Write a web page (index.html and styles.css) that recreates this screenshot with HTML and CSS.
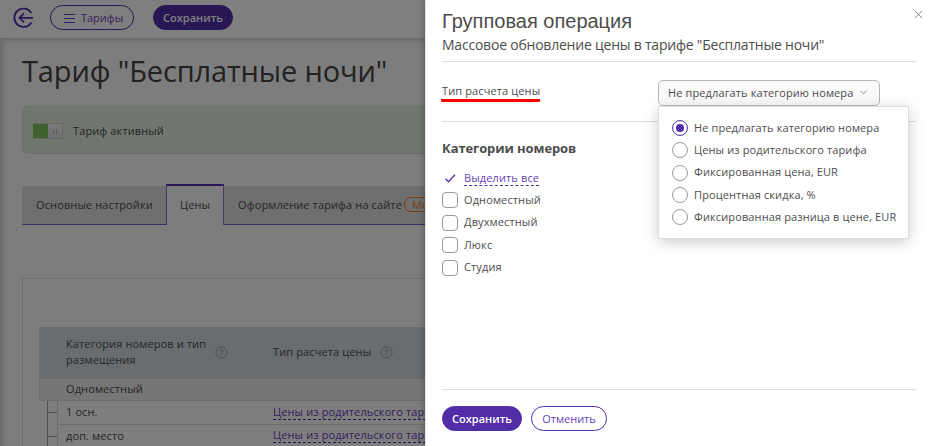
FILE: index.html
```html
<!DOCTYPE html>
<html lang="ru">
<head>
    <meta charset="UTF-8">
    <meta name="viewport" content="width=device-width, initial-scale=1.0">
    <title>Тариф "Бесплатные ночи"</title>
    <link rel="stylesheet" href="styles.css">
</head>
<body>
    <div class="page">
        <header class="topbar">
            <a class="back" href="#">
                <svg width="22" height="22" viewBox="0 0 22 22" fill="none" stroke="currentColor" stroke-width="1.8">
                    <path d="M19.4 6A9.2 9.2 0 1 0 19.4 15.5"/>
                    <path d="M21 10.8H7.5M12 6.3L7.5 10.8L12 15.3"/>
                </svg>
            </a>
            <button class="btn btn-outline btn-menu">
                <svg width="11" height="9" viewBox="0 0 11 9" stroke="currentColor"><path d="M0 .5H11M0 4.5H11M0 8.5H11"/></svg>
                <span>Тарифы</span>
            </button>
            <button class="btn btn-primary">Сохранить</button>
        </header>

        <main class="content">
            <h1>Тариф "Бесплатные ночи"</h1>
            <div class="status">
                <span class="switch"><i></i></span>
                <span>Тариф активный</span>
            </div>
            <nav class="tabs">
                <a class="tab tab-settings">Основные настройки</a>
                <a class="tab tab-active">Цены</a>
                <a class="tab tab-design">Оформление тарифа на сайте <span class="badge">Мобильный</span></a>
            </nav>
            <section class="panel">
                <div class="row row-head">
                    <div class="cell cell-name"><span>Категория номеров и тип размещения</span>
                        <svg class="help" viewBox="0 0 13 13"><circle cx="6.5" cy="6.5" r="5.5"/><path d="M4.9 5.4C4.9 3 8.2 3.1 8.2 5.1C8.2 6.3 6.5 6.2 6.5 7.5M6.5 8.7V9.8"/></svg>
                    </div>
                    <div class="cell"><span>Тип расчета цены</span>
                        <svg class="help" viewBox="0 0 13 13"><circle cx="6.5" cy="6.5" r="5.5"/><path d="M4.9 5.4C4.9 3 8.2 3.1 8.2 5.1C8.2 6.3 6.5 6.2 6.5 7.5M6.5 8.7V9.8"/></svg>
                    </div>
                </div>
                <div class="row row-group">Одноместный</div>
                <div class="row row-item">
                    <div class="tree"></div>
                    <div class="cell cell-place">1 осн.</div>
                    <div class="cell"><a class="link" href="#">Цены из родительского тарифа</a></div>
                </div>
                <div class="row row-item">
                    <div class="tree"></div>
                    <div class="cell cell-place">доп. место</div>
                    <div class="cell"><a class="link" href="#">Цены из родительского тарифа</a></div>
                </div>
            </section>
        </main>
    </div>

    <div class="overlay">
        <div class="modal">
            <button class="close">
                <svg width="9" height="9" viewBox="0 0 9 9" stroke="currentColor"><path d="M.8 .8L8.2 8.2M8.2 .8L.8 8.2"/></svg>
            </button>
            <div class="modal-head">
                <h2>Групповая операция</h2>
                <p>Массовое обновление цены в тарифе "Бесплатные ночи"</p>
            </div>
            <div class="field">
                <span class="field-label">Тип расчета цены</span>
                <div class="select">
                    <button class="select-value"><span>Не предлагать категорию номера</span>
                        <svg width="7" height="5" viewBox="0 0 7 5" fill="none" stroke="currentColor"><path d="M.5 .8L3.5 3.8L6.5 .8"/></svg>
                    </button>
                    <div class="dropdown">
                        <label class="option"><span class="radio checked"></span><span>Не предлагать категорию номера</span></label>
                        <label class="option"><span class="radio"></span><span>Цены из родительского тарифа</span></label>
                        <label class="option"><span class="radio"></span><span>Фиксированная цена, EUR</span></label>
                        <label class="option"><span class="radio"></span><span>Процентная скидка, %</span></label>
                        <label class="option"><span class="radio"></span><span>Фиксированная разница в цене, EUR</span></label>
                    </div>
                </div>
            </div>
            <div class="categories">
                <h3>Категории номеров</h3>
                <div class="option select-all">
                    <svg width="16" height="16" viewBox="0 0 16 16" fill="none" stroke="currentColor" stroke-width="1.3"><path d="M3.5 8.7L6.5 11.7L13 4.8"/></svg>
                    <a class="link" href="#">Выделить все</a>
                </div>
                <label class="option"><span class="checkbox"></span><span>Одноместный</span></label>
                <label class="option"><span class="checkbox"></span><span>Двухместный</span></label>
                <label class="option"><span class="checkbox"></span><span>Люкс</span></label>
                <label class="option"><span class="checkbox"></span><span>Студия</span></label>
            </div>
            <div class="modal-footer">
                <button class="btn btn-primary">Сохранить</button>
                <button class="btn btn-outline">Отменить</button>
            </div>
        </div>
    </div>
</body>
</html>
```
FILE: styles.css
```css
*,
*::before {
    box-sizing: border-box;
}

body {
    margin: 0;
    height: 446px;
    overflow: hidden;
    font-family: "Open Sans", "Noto Sans", sans-serif;
    font-size: 11px;
    letter-spacing: 0.12px;
    color: #4d4d4d;
    background: #fff;
}

h1, h2, h3, p {
    margin: 0;
    font-weight: 400;
}

a {
    color: inherit;
    text-decoration: none;
}

button {
    font: inherit;
    cursor: pointer;
}

.page {
    height: 446px;
    overflow: hidden;
}

.topbar {
    display: flex;
    align-items: flex-start;
    height: 38px;
    padding: 5px 0 0 12px;
}

.back {
    width: 38px;
    height: 26px;
    padding-top: 2px;
    color: #522da8;
}

.btn {
    display: flex;
    align-items: center;
    justify-content: center;
    width: 80px;
    height: 25px;
    padding: 0 0 1px;
    border: 1px solid #522da8;
    border-radius: 13px;
}

.btn-primary {
    background: #522da8;
    color: #fff;
    font-weight: 600;
    letter-spacing: 0;
}

.btn-outline {
    background: #fff;
    color: #6743b8;
}

.btn-menu {
    width: 84px;
    gap: 6px;
    margin-right: 19px;
    padding-left: 3px;
}

.btn-menu svg {
    margin-top: 2px;
}

.content {
    height: 408px;
    padding: 15px 0 0 22px;
    background: #fafafa;
    box-shadow: inset 3px 3px 4px rgba(0, 0, 0, 0.15);
}

h1 {
    height: 53px;
    font-size: 29px;
    letter-spacing: -0.13px;
    line-height: 36px;
    color: #444;
    white-space: nowrap;
}

.status {
    display: flex;
    align-items: center;
    gap: 10px;
    height: 48px;
    padding: 1px 0 0 10px;
    border: 1px solid #d6decf;
    border-radius: 6px;
    background: #e2ecdc;
}

.switch {
    display: flex;
    justify-content: flex-end;
    width: 30px;
    height: 16px;
    border: 1px solid #ccc;
    border-left: none;
    background: #7cc35c;
}

.switch i {
    width: 14px;
    padding: 5px 5px;
    background: linear-gradient(#f5f5f5, #dedede);
}

.switch i::before {
    content: "";
    display: block;
    width: 4px;
    height: 5px;
    border: solid #b5b5b5;
    border-width: 0 1px;
}

.tabs {
    display: flex;
    align-items: flex-end;
    height: 41px;
    margin-top: 30px;
    border-bottom: 1px solid #7d5cc4;
}

.tab {
    display: flex;
    align-items: center;
    height: 38px;
    padding-bottom: 1px;
    background: #dedede;
    white-space: nowrap;
}

.tab-settings {
    width: 144px;
    padding-left: 14px;
}

.tab-active {
    justify-content: center;
    width: 58px;
    height: 41px;
    margin-bottom: -1px;
    padding-bottom: 3px;
    border: 1px solid #9276cc;
    border-top: 2px solid #522da8;
    border-bottom: none;
    background: #fafafa;
}

.tab-design {
    flex: 1;
    padding-left: 14px;
}

.badge {
    margin-left: 2px;
    padding: 0 7px;
    border: 1px solid #f08020;
    border-radius: 7px;
    line-height: 13px;
    color: #f08020;
}

.panel {
    height: 200px;
    margin-top: 53px;
    padding: 48px 0 0 16px;
    border: 1px solid #dcdcdc;
    background: #fdfdfd;
}

.row {
    display: flex;
    align-items: center;
}

.row-head {
    height: 51px;
    padding: 0 0 1px 27px;
    background: #d3dadf;
    line-height: 16px;
}

.cell {
    display: flex;
    align-items: center;
    gap: 9px;
}

.cell-name {
    gap: 6px;
    width: 207px;
}

.cell-name span {
    width: 143px;
}

.help {
    width: 13px;
    height: 13px;
    fill: none;
    stroke: #999;
}

.row-group {
    height: 23px;
    padding: 0 0 2px 26px;
    border: 1px solid #d3dadf;
    background: #ececee;
}

.row-item {
    height: 23.5px;
    margin-left: 8px;
}

.tree {
    align-self: stretch;
    width: 10px;
    border-left: 1px solid #9aa5bd;
    background: linear-gradient(#9aa5bd, #9aa5bd) 0 11px / 100% 1px no-repeat;
}

.cell-place {
    width: 216px;
    padding-left: 8px;
    border-left: 1px solid #d3dadf;
}

.row-item .cell {
    align-self: stretch;
    padding-bottom: 1px;
    border-bottom: 1px solid #d3dadf;
    white-space: nowrap;
}

.row-item .cell:last-child {
    flex: 1;
    padding-bottom: 0;
}

.link {
    border-bottom: 1px dashed #522da8;
    line-height: 14px;
    color: #6743b8;
}

.overlay {
    position: absolute;
    inset: 0;
    overflow: hidden;
    background: rgba(0, 0, 0, 0.5);
}

.modal {
    position: absolute;
    top: 0;
    right: 0;
    display: flex;
    flex-direction: column;
    width: 506px;
    height: 446px;
    padding: 0 15px 15px 16px;
    border-left: 1px solid #ddd;
    background: #fff;
    box-shadow: 0 0 8px rgba(0, 0, 0, 0.3);
}

.close {
    position: absolute;
    top: 10px;
    right: 8px;
    display: flex;
    padding: 0;
    border: none;
    background: none;
    color: #888;
}

.modal-head {
    height: 62px;
    padding-top: 9px;
    border-bottom: 1px solid #ddd;
}

h2 {
    font-family: "Liberation Sans", sans-serif;
    font-size: 20px;
    letter-spacing: 0;
    line-height: 24px;
}

.modal-head p {
    font-size: 14px;
    letter-spacing: -0.22px;
    line-height: 23px;
}

.field {
    display: flex;
    align-items: flex-start;
    justify-content: space-between;
    height: 60px;
    padding: 18px 36px 0 0;
    border-bottom: 1px solid #ddd;
}

.field-label {
    height: 22px;
    margin-left: -1px;
    padding: 0 0 0 1px;
    border-bottom: 3px solid #f00;
    border-radius: 1px;
    line-height: 22px;
}

.select {
    position: relative;
}

.select-value {
    display: flex;
    align-items: center;
    gap: 7px;
    width: 222px;
    height: 26px;
    padding: 0 0 1px 9px;
    border: 1px solid #b8b8b8;
    border-radius: 5px;
    background: #fafafa;
    color: #4d4d4d;
    letter-spacing: 0.12px;
}

.select-value svg {
    color: #888;
}

.dropdown {
    position: absolute;
    top: 26px;
    left: 0;
    width: 251px;
    height: 133px;
    padding: 10px 13px;
    border: 1px solid #ddd;
    background: #fff;
    box-shadow: 0 3px 14px rgba(0, 0, 0, 0.2);
}

.option {
    display: flex;
    align-items: center;
    gap: 6px;
    height: 22.3px;
    line-height: 14px;
    white-space: nowrap;
}

.option span:last-child {
    padding-bottom: 1px;
}

.radio,
.checkbox {
    flex-shrink: 0;
    width: 16px;
    height: 16px;
    border: 1px solid #999;
    border-radius: 50%;
    background: #fff;
}

.radio.checked {
    padding: 3px;
    border-color: #522da8;
}

.radio.checked::before {
    content: "";
    display: block;
    width: 8px;
    height: 8px;
    border-radius: 50%;
    background: #522da8;
}

.checkbox {
    border-radius: 4px;
}

.categories {
    flex: 1;
    padding-top: 17px;
}

h3 {
    height: 28.4px;
    font-size: 13px;
    font-weight: 700;
    letter-spacing: -0.1px;
    line-height: 18px;
}

.categories .option {
    height: 22.5px;
}

.categories .select-all {
    height: 21.8px;
    color: #522da8;
}

.modal-footer {
    display: flex;
    gap: 9px;
    padding-top: 16px;
    border-top: 1px solid #ddd;
}

.modal-footer .btn-outline {
    width: 76px;
}
```
